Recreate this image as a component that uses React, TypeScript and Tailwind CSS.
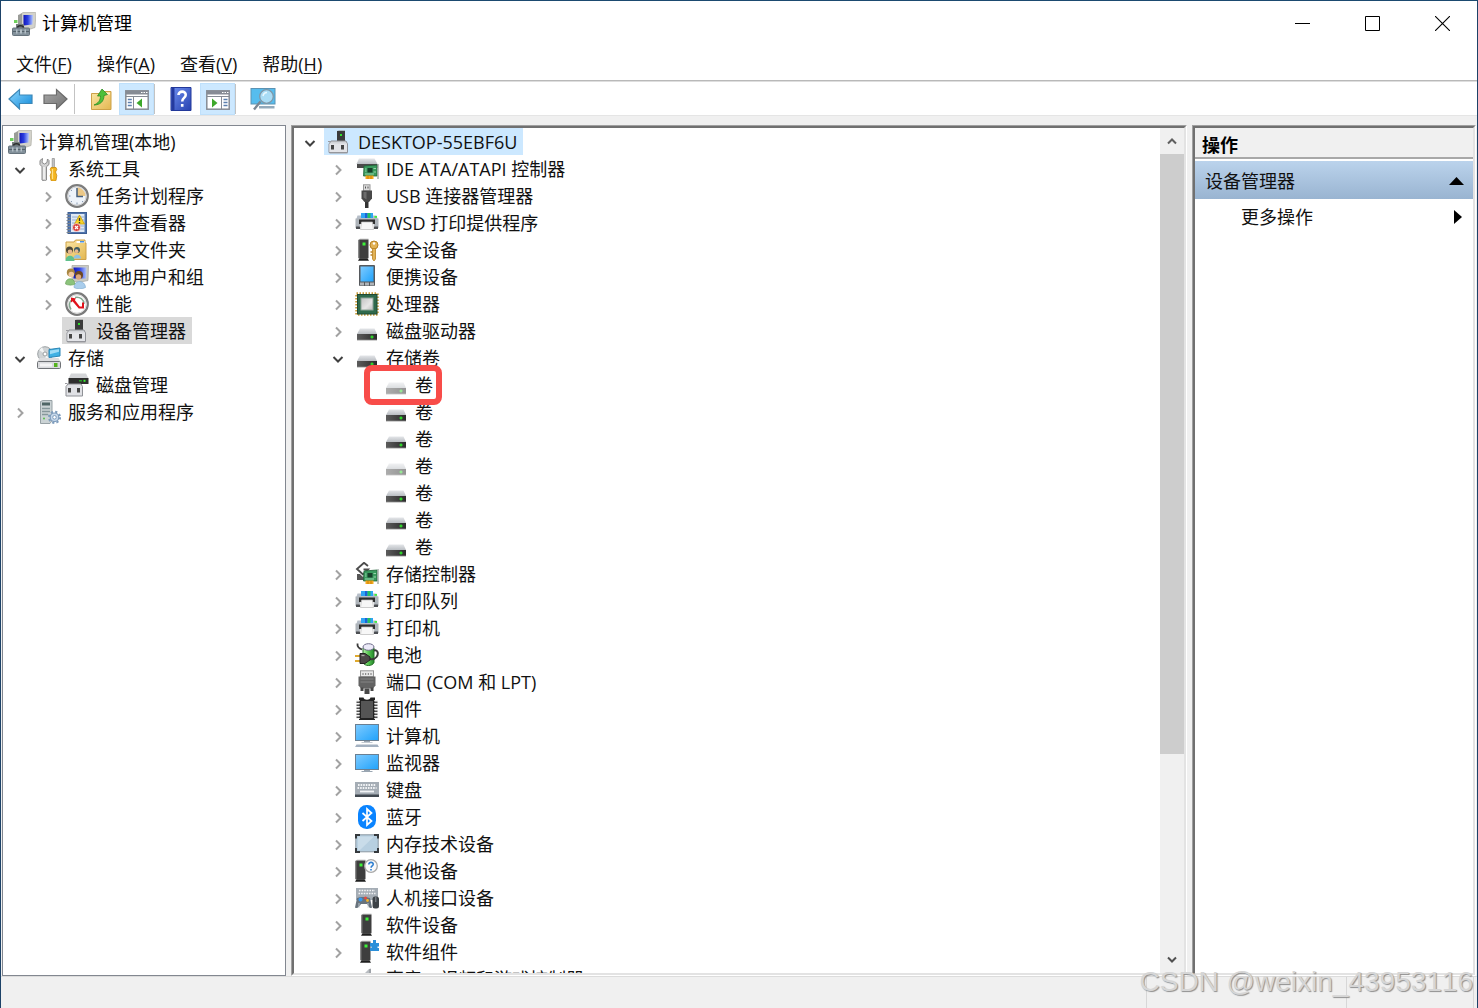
import type { ReactNode } from "react";

const FONT = "font-['Open_Sans','Noto_Sans_CJK_SC',sans-serif] [font-kerning:none]";

function Icon({ children, className = "" }: { children: ReactNode; className?: string }) {
  return (
    <svg viewBox="0 0 24 24" width="24" height="24" aria-hidden="true" className={`shrink-0 ${className}`}>
      {children}
    </svg>
  );
}

/* ---------- shared gradients ---------- */

function Gradients() {
  return (
    <svg width="0" height="0" aria-hidden="true" className="absolute">
      <defs>
        <linearGradient id="screen" x1="0" y1="0" x2="1" y2="1">
          <stop offset="0" stopColor="#7fcbff" />
          <stop offset="1" stopColor="#1fa2fb" />
        </linearGradient>
        <linearGradient id="crt" x1="0" y1="0" x2="1" y2="0">
          <stop offset="0" stopColor="#1217b8" />
          <stop offset="0.45" stopColor="#2b3fe0" />
          <stop offset="1" stopColor="#b4c8ff" />
        </linearGradient>
        <linearGradient id="slab" x1="0" y1="0" x2="0" y2="1">
          <stop offset="0" stopColor="#e4e6e9" />
          <stop offset="1" stopColor="#b9bdc2" />
        </linearGradient>
        <linearGradient id="dark" x1="0" y1="0" x2="1" y2="0">
          <stop offset="0" stopColor="#5c5c5c" />
          <stop offset="1" stopColor="#2b2b2b" />
        </linearGradient>
        <linearGradient id="folder" x1="0" y1="0" x2="1" y2="1">
          <stop offset="0" stopColor="#fbe7a6" />
          <stop offset="1" stopColor="#e3b750" />
        </linearGradient>
        <linearGradient id="back" x1="0" y1="0" x2="1" y2="1">
          <stop offset="0" stopColor="#8fd8ff" />
          <stop offset="1" stopColor="#1089d8" />
        </linearGradient>
        <linearGradient id="fwd" x1="0" y1="0" x2="1" y2="1">
          <stop offset="0" stopColor="#a9a9a9" />
          <stop offset="1" stopColor="#707070" />
        </linearGradient>
        <linearGradient id="help" x1="0" y1="0" x2="1" y2="1">
          <stop offset="0" stopColor="#6e8ff0" />
          <stop offset="1" stopColor="#2742b0" />
        </linearGradient>
        <linearGradient id="chip" x1="0" y1="0" x2="1" y2="1">
          <stop offset="0" stopColor="#c3c3c3" />
          <stop offset="0.6" stopColor="#e6e6e6" />
          <stop offset="1" stopColor="#bcbcbc" />
        </linearGradient>
        <linearGradient id="green" x1="0" y1="0" x2="1" y2="0">
          <stop offset="0" stopColor="#b9f0ad" />
          <stop offset="0.5" stopColor="#58c552" />
          <stop offset="1" stopColor="#23872a" />
        </linearGradient>
      </defs>
    </svg>
  );
}

/* ---------- console icons ---------- */

const ManagementIcon = () => (
  <Icon>
    <path d="M8 2.500L11 .5h12.500l.5 1-1 14-9 3-4-3z" fill="#d3d2ca" stroke="#a3a29b" strokeWidth=".6" />
    <path d="M6 3l4-1.500V17H6z" fill="#9a9c98" />
    <path d="M11.500 3H21l-.5 9.500-9 1z" fill="url(#crt)" />
    <path d="M2 8h3.500v3H2z" fill="#6fd05d" />
    <path d="M4 12h8v4H4z" fill="#77807f" />
    <path d="M5.500 16c0-3 6-3 6 0" fill="none" stroke="#2a2c2e" strokeWidth="1.600" />
    <rect x=".5" y="16" width="17" height="7.500" rx="1" fill="#83919b" stroke="#66737c" />
    <path d="M1 19.500h16" stroke="#55626b" strokeWidth="1" />
    <path d="M4 17.500h1.500v4H4zM8 17.500h2v4H8zM12.500 17.500H14v4h-1.500z" fill="#b4c0c7" />
  </Icon>
);

const ToolsIcon = () => (
  <Icon>
    <path d="M5.500 1.500L3 3.500v4l2 2.200v13.300c1 1 3.500 1 4.500 0V9.700L12 7.500v-4l-1.500-1.500-.5 3.500L7.500 7 5 5.500z" fill="#d2d2d2" stroke="#8a8a8a" />
    <path d="M7 10v12" stroke="#fff" strokeWidth="1.200" />
    <path d="M15.200 1.500h2.200v9h-2.200z" fill="#c6c6c6" stroke="#8b8b8b" strokeWidth=".7" />
    <path d="M14 10.500h5l.8 2-1.300 2.500 1.300 3.500-.8 5c-1.300.8-3.700.8-5 0l-.8-5L14.500 15l-1.300-2.500z" fill="#f4b51e" stroke="#c98a0c" strokeWidth=".8" />
    <path d="M15.500 12v10" stroke="#ffe28a" strokeWidth="1.200" />
  </Icon>
);

const ClockIcon = () => (
  <Icon>
    <circle cx="12" cy="12" r="10.800" fill="#eef3fa" stroke="#7d7d7d" strokeWidth="2.200" />
    <circle cx="12" cy="12" r="9.200" fill="none" stroke="#cdcdcd" strokeWidth="1" />
    <path d="M12 12V3.500A8.500 8.500 0 0 1 20.500 12z" fill="#ecc887" />
    <path d="M12 4v8.500h6" fill="none" stroke="#47607f" strokeWidth="1.500" />
    <path d="M12 18.500v2M4 12h1.500M6 6l1 1M6 18l1-1M18 18l-1-1" stroke="#8a9cb4" />
  </Icon>
);

const EventIcon = () => (
  <Icon>
    <rect x="3" y="1.500" width="18.500" height="21" fill="#4f74ad" stroke="#3d5f94" />
    <rect x="6" y="3" width="13.500" height="18" fill="#dfe9f5" />
    <path d="M7 6h12M7 9h12M7 12h12M7 15h12M7 18h12" stroke="#93aed2" />
    <path d="M1.500 3.500h4M1.500 6.500h4M1.500 9.500h4M1.500 12.500h4M1.500 15.500h4M1.500 18.500h4M1.500 21.500h4" stroke="#7e858e" strokeWidth="1.200" />
    <path d="M14.500 4l5 9h-10z" fill="#f7d426" stroke="#c69c10" strokeWidth=".8" />
    <path d="M14.500 7v3M14.500 11v1.200" stroke="#333" strokeWidth="1.300" />
    <circle cx="11.500" cy="16.500" r="4" fill="#d9423e" stroke="#fff" strokeWidth=".6" />
    <path d="M10 15l3 3M13 15l-3 3" stroke="#fff" strokeWidth="1.200" />
  </Icon>
);

const SharedIcon = () => (
  <Icon>
    <path d="M1 4h8l1.500-2H20v3h1v16.500H1z" fill="url(#folder)" stroke="#cda148" />
    <path d="M11.500 3h8v2h-8z" fill="#fff" />
    <path d="M15 3h4v1.500h-4z" fill="#4a90e0" />
    <path d="M8.500 20.500c0-5 7.500-5 7.500 0z" fill="#8fc1e3" />
    <circle cx="12" cy="12" r="3" fill="#3c5b62" />
    <circle cx="11.500" cy="13.200" r="1.900" fill="#e7b88e" />
    <path d="M.5 23c0-7 9-7 9 0z" fill="#5fc08b" />
    <circle cx="4.500" cy="12" r="3.500" fill="#4a4738" />
    <circle cx="5" cy="13.800" r="2.300" fill="#e7b88e" />
  </Icon>
);

const UsersIcon = () => (
  <Icon>
    <path d="M7 .5h16.500l-.5 15-10 2-6-2z" fill="#c9c9c2" stroke="#a5a59f" strokeWidth=".7" />
    <path d="M8.500 2.500H21.500l-.5 11H8.500z" fill="url(#crt)" />
    <path d="M9 22.500c0-8 11-8 11.500 0-3 1.800-9 1.800-11.500 0z" fill="#a9cdec" stroke="#7ba7cc" strokeWidth=".6" />
    <circle cx="14" cy="10" r="4" fill="#6d4722" />
    <circle cx="13.500" cy="12" r="2.700" fill="#dca87d" />
    <path d="M.5 19c0-7 9-7 9.500 0-2 1.500-7 1.500-9.500 0z" fill="#8cc37c" stroke="#669d58" strokeWidth=".6" />
    <circle cx="5.800" cy="7.500" r="4" fill="#a98742" />
    <circle cx="6.300" cy="9.500" r="2.800" fill="#f0c8a2" />
  </Icon>
);

const PerformanceIcon = () => (
  <Icon>
    <circle cx="12" cy="12" r="10.800" fill="#fff" stroke="#7b7b7b" strokeWidth="2.200" />
    <circle cx="12" cy="12" r="9.200" fill="none" stroke="#d3d3d3" />
    <path d="M6 17.500c-2.500-4-1.500-8 1.500-10.500M10 5.500c5-1 9 2 9 6.500" fill="none" stroke="#86a791" strokeWidth="1.500" />
    <path d="M6 5.500l5 1-1.200 1.500 5.700 7.500-1.500 1.300-6.500-7.500-1.500 1.200z" fill="#e0121b" />
    <path d="M14.500 15.500h3.500v-5" fill="none" stroke="#e0121b" strokeWidth="2" />
  </Icon>
);

const DeviceManagerIcon = () => (
  <Icon>
    <rect x="10" y="1" width="8" height="11" fill="#3b3b3b" />
    <path d="M10 1l2-.5h6V1z" fill="#8c8c8c" />
    <rect x="13" y="4" width="2" height="2" fill="#31e02c" />
    <path d="M4 11h15l1.500 3v8.500H2V14z" fill="#d3d5d9" stroke="#8f9196" />
    <rect x="2.500" y="13.500" width="17.500" height="8.500" fill="#e3e4e8" />
    <rect x="4" y="15" width="3" height="4.500" fill="#454545" />
    <rect x="14" y="15" width="3" height="4.500" fill="#454545" />
    <path d="M1 11.500h2.500M2.500 23h18" stroke="#9b9ba0" />
  </Icon>
);

const StorageIcon = () => (
  <Icon>
    <circle cx="8" cy="8" r="7.300" fill="#cfd3d5" stroke="#9ba0a2" />
    <path d="M8 8L2 4l3-3zM8 8l5 5-4 2z" fill="#f2f4f4" />
    <circle cx="8" cy="8" r="2" fill="#fff" stroke="#9ba0a2" />
    <path d="M12 3.500l11-1.500v8l-11 1.500z" fill="#3fb1e4" stroke="#2d86b5" />
    <path d="M13 4.500l9-1.300v2.500l-9 2.500z" fill="#9fdcf6" />
    <path d="M2.500 12h19l2 3.500h-23z" fill="#dcdddf" />
    <rect x=".5" y="15.500" width="23" height="7" rx="1" fill="#d9dadd" stroke="#6f7276" />
    <rect x="3" y="17.500" width="12" height="3" fill="#f4f4f5" />
    <rect x="17" y="17" width="3.500" height="4" fill="#55b31e" />
  </Icon>
);

const DiskManagementIcon = () => (
  <Icon>
    <path d="M6 .5h15l2.500 5h-20z" fill="#d4d5d8" />
    <rect x="3.500" y="5" width="20" height="6" fill="#2e2e2e" />
    <rect x="14" y="7" width="3" height="1.500" fill="#2a9b28" />
    <rect x="18.500" y="6.800" width="2" height="2" fill="#37ee31" />
    <path d="M3 11h13l1.500 2.500v9.500H1v-9.500z" fill="#e0e1e5" stroke="#8f9196" />
    <rect x="3" y="15" width="3" height="4.500" fill="#454545" />
    <rect x="12" y="15" width="3" height="4.500" fill="#454545" />
    <path d="M0 10.500h2.500" stroke="#9b9ba0" />
  </Icon>
);

const ServicesIcon = () => (
  <Icon>
    <path d="M3.500 1.500L6 .5h9v20l-2 3H3.500z" fill="#cbd3d5" stroke="#97a1a5" />
    <path d="M5 2.500h8v3H5z" fill="#4f6566" />
    <path d="M5 8.500h8M5 11.500h8M5 14.500h6" stroke="#86979b" strokeWidth="1.300" />
    <circle cx="7" cy="18.500" r="1" fill="#57bf4b" />
    <circle cx="17.500" cy="17.300" r="5.600" fill="none" stroke="#7f9dbd" strokeWidth="2" strokeDasharray="2.200 2.200" />
    <circle cx="17.500" cy="17.300" r="4.300" fill="#c7d8ea" stroke="#7f9dbd" strokeWidth="1.200" />
    <circle cx="17.500" cy="17.300" r="1.800" fill="#fff" stroke="#7f9dbd" />
  </Icon>
);

/* ---------- device icons ---------- */

const Board = ({ y = 0 }: { y?: number }) => (
  <g transform={`translate(0 ${y})`}>
    <path d="M9 9l13-1v11H8.500z" fill="#3a9a5e" stroke="#1f6437" strokeWidth=".8" />
    <path d="M12.500 11h5v4.500h-5z" fill="#17402a" />
    <path d="M10 12h1.500M10 14h1.500M18.500 11.500H21M18.500 15H21M10 17h9" stroke="#9fdcb2" strokeWidth=".9" />
    <path d="M10.500 18.500h8v3.500h-8z" fill="#f5a81c" />
    <path d="M13 19v3M16 19v3" stroke="#b8730a" strokeWidth=".7" />
    <path d="M23 7v15" stroke="#8f9a94" strokeWidth="1.200" />
  </g>
);

const IdeIcon = () => (
  <Icon>
    <path d="M4 1.500h15.500l3 5.500h-21z" fill="url(#slab)" />
    <path d="M2 7h20.500v4H2z" fill="#4a4a4a" />
    <Board />
  </Icon>
);

const UsbIcon = () => (
  <Icon>
    <rect x="8.500" y=".8" width="6.500" height="6" fill="#dcdcdc" stroke="#979797" />
    <path d="M10.500 2.500v2M13 2.500v2" stroke="#555" />
    <path d="M6.500 6.500h10.500v8l-3 3.500h-4.500l-3-3.500z" fill="#484848" />
    <path d="M8.500 8h3v7.500L8.500 13.500z" fill="#6c6c6c" />
    <path d="M10 18h3.500v6H10z" fill="#333" />
  </Icon>
);

const PrinterIcon = () => (
  <Icon>
    <path d="M2.500 4.500L1 9h22l-1.500-4.500z" fill="#b6bec8" />
    <path d="M6 2h12v5H6z" fill="#2fa4f4" />
    <path d="M10 2h2.500v5H10z" fill="#1c62d8" />
    <path d="M12.500 2h3v5h-3z" fill="#25bf62" />
    <path d="M.5 7.500h5l1 1h11l1-1h5v9.500h-3.500l-2-6H6l-2 6H.5z" fill="#aeb4ba" />
    <path d="M4 8.500h16v4.500H4z" fill="#2d2d2d" />
    <path d="M1 15.500h4V18H1zM19 15.500h4V18h-4z" fill="#4c4f53" />
    <path d="M6.500 11h11l1 7.500h-13z" fill="#f7f7f7" stroke="#b9b9b9" strokeWidth=".7" />
    <rect x="19.500" y="5" width="2.500" height="1.800" fill="#3cf03c" />
  </Icon>
);

const Tower = ({ x = 0 }: { x?: number }) => (
  <g transform={`translate(${x} 0)`}>
    <path d="M1.500 2L3 .8h8.500V2z" fill="#a7a7a7" />
    <rect x="1.500" y="1.800" width="10" height="18.500" fill="#3e3e3e" />
    <path d="M1.500 2h1v18h-1z" fill="#747474" />
    <rect x="5.500" y="4.500" width="3" height="3" fill="#3cf138" />
    <path d="M2.500 20.300h8l1.500 2.500H1z" fill="#1f1f1f" />
  </g>
);

const SecurityIcon = () => (
  <Icon>
    <Tower x={2} />
    <circle cx="19" cy="7" r="4" fill="#e2b255" stroke="#b98325" />
    <circle cx="19" cy="5.500" r="1.200" fill="#fff" />
    <path d="M17.500 10.500h3V21l-1.500 2-1.500-2z" fill="#e2b255" stroke="#b98325" strokeWidth=".8" />
    <path d="M17.500 14h-2M17.500 17h-2" stroke="#b98325" strokeWidth="1.300" />
  </Icon>
);

const PortableIcon = () => (
  <Icon>
    <rect x="4" y="0" width="16" height="21" rx="1" fill="#56595d" />
    <rect x="5.500" y="1.500" width="13" height="15" fill="url(#screen)" />
    <path d="M5 17.500h4v3H5zM10 17.500h4v3h-4zM15 17.500h4v3h-4z" fill="#aeb3b8" />
  </Icon>
);

const CpuIcon = () => (
  <Icon>
    <rect x="1.500" y="1.500" width="21" height="21" fill="none" stroke="#c79b3a" strokeWidth="2.500" strokeDasharray="1.500 1.500" />
    <rect x="2.500" y="2.500" width="19.500" height="19.500" fill="#2f6a4c" stroke="#1f4a34" />
    <rect x="6" y="6" width="12" height="12" fill="url(#chip)" stroke="#8da497" />
  </Icon>
);

const DriveIcon = ({ faded = false }: { faded?: boolean }) => (
  <Icon className={faded ? "opacity-50" : ""}>
    <path d="M5 9.500h14.500l2.500 5.500H2z" fill="url(#slab)" />
    <rect x="2" y="15" width="20" height="6" fill="url(#dark)" />
    <path d="M2 21h20" stroke="#8a8a8a" strokeWidth=".8" />
    <path d="M15.500 18h3M17 16.500v3" stroke="#2fe02b" strokeWidth="1.400" />
  </Icon>
);

const StorageControllerIcon = () => (
  <Icon>
    <path d="M2 12h16v6H2z" fill="#555" />
    <path d="M13 8h6l3 2.500h-9z" fill="#cfcfcf" />
    <path d="M13 4L9 .8 2 7l6 5.500 5-5H8.500" fill="none" stroke="#fff" strokeWidth="3.500" />
    <path d="M13 4L9 .8 2 7l6 5.500 5-5H8.500" fill="none" stroke="#4c4c4c" strokeWidth="1.900" />
    <Board y={0} />
  </Icon>
);

const BatteryIcon = () => (
  <Icon>
    <path d="M8 5v14.500c1.500 4 9.500 4 11 0V5z" fill="url(#green)" stroke="#256f27" />
    <ellipse cx="13.500" cy="4" rx="5.500" ry="3.300" fill="#eceaf8" stroke="#6c6a88" />
    <path d="M2.500 .5c-.5 4 2 5 4.500 6" fill="none" stroke="#3b3b3b" strokeWidth="1.800" />
    <path d="M19 7.500c4.500-1 4.500 4 2.500 6.500S16 16.500 14 16" fill="none" stroke="#3b3b3b" strokeWidth="2" />
    <path d="M0 13h5M0 18h5" stroke="#dfa92e" strokeWidth="2" />
    <path d="M5 10.500h5l5 3.500v3l-5 3.500H5z" fill="#4c4848" stroke="#252323" />
    <path d="M6.500 12.500h3" stroke="#a9a4a4" strokeWidth="1.300" />
  </Icon>
);

const PortIcon = () => (
  <Icon>
    <rect x="5.500" y=".8" width="13" height="6" fill="#e9e9e9" stroke="#969696" />
    <path d="M8 3v2M10.700 3v2M13.300 3v2M16 3v2" stroke="#777" />
    <path d="M3.500 6.500h17v9l-2.500 3H6l-2.500-3z" fill="#636363" />
    <path d="M5.500 9h13M5.500 12h13" stroke="#858585" />
    <path d="M5.500 17.500h3V21h-3zM15.500 17.500h3V21h-3zM9.500 18.500h5V24h-5z" fill="#484848" />
  </Icon>
);

const FirmwareIcon = () => (
  <Icon>
    <path d="M4 .5h4.500c.5 3 6.500 3 7 0H20v22.500H4z" fill="#222" />
    <path d="M6 4h12v17H6z" fill="#555" />
    <path d="M3 3v19M21 3v19" stroke="#f2f2f2" strokeWidth="3.500" strokeDasharray="1.500 1.500" />
    <path d="M3 4.500v18M21 4.500v18" stroke="#4f4f4f" strokeWidth="3" strokeDasharray="1.500 1.500" />
  </Icon>
);

const ComputerIcon = () => (
  <Icon>
    <rect x=".5" y=".5" width="23" height="16" fill="url(#screen)" stroke="#6a7f92" />
    <path d="M9 17h6v1.500H9z" fill="#9aa6b2" />
    <path d="M6.500 18.500h11" stroke="#c3cad2" />
    <path d="M1.500 20.500h21l1.500 2.500H0z" fill="#a3b1c1" />
  </Icon>
);

const MonitorIcon = () => (
  <Icon>
    <rect x=".5" y="3.500" width="23" height="15" fill="url(#screen)" stroke="#6a7f92" />
    <path d="M9 19h6v1.500H9z" fill="#9aa6b2" />
    <path d="M6.500 20.500h11" stroke="#9aa6b2" />
  </Icon>
);

const KeyboardIcon = () => (
  <Icon>
    <rect x="0" y="4" width="24" height="13" fill="#a5adb5" />
    <path d="M0 16.500h24V19H0z" fill="#404850" />
    <path d="M3 7h18M2.500 10h19" stroke="#f2f4f6" strokeWidth="1.800" strokeDasharray="1.600 1" />
    <path d="M5 13.500h14" stroke="#f2f4f6" strokeWidth="1.800" />
  </Icon>
);

const BluetoothIcon = () => (
  <Icon>
    <rect x="3" y="0" width="18" height="24" rx="8.500" fill="#0a84ff" />
    <path d="M7.500 8l9 8-4.500 4V4l4.500 4-9 8" fill="none" stroke="#fff" strokeWidth="1.700" />
  </Icon>
);

const MemoryIcon = () => (
  <Icon>
    <rect x=".8" y="2.800" width="22.400" height="17" rx="1.500" fill="#b7cfe0" stroke="#8a97a1" />
    <path d="M1 6.500V3h4M19 3h4v3.500M23 16v4h-4M5 20H1v-4" fill="none" stroke="#35393d" strokeWidth="2" />
    <path d="M3 4.500h16L5 18H3z" fill="#d5e4ef" opacity=".6" />
  </Icon>
);

const OtherIcon = () => (
  <Icon>
    <Tower x={-1} />
    <circle cx="16" cy="7" r="6.300" fill="#fafafa" stroke="#a9a9a9" strokeWidth="1.300" />
    <path d="M13.800 5.500c0-3 4.700-2.700 4.400 0-.2 1.500-2 1.500-2.100 3.200M16 10v1.500" fill="none" stroke="#2f7fd0" strokeWidth="1.600" />
  </Icon>
);

const HidIcon = () => (
  <Icon>
    <rect x="1" y="2" width="22" height="12" fill="#a5adb5" />
    <path d="M4 4.500h16M3.500 7.500h17" stroke="#f2f4f6" strokeWidth="1.600" strokeDasharray="1.600 1" />
    <path d="M2 12c2-1.500 10-1.500 13 0l2 9.500c-2 1.500-3 0-5-3.500H6c-2 3.500-4 5-6 3.500z" fill="#68737d" />
    <circle cx="5.500" cy="13.500" r="2" fill="#3897ee" />
    <circle cx="10.500" cy="12" r="1.500" fill="#e8483c" />
    <circle cx="12.500" cy="14.500" r="1.400" fill="#f1b52b" />
    <rect x="17.500" y="10.500" width="6.500" height="12" rx="2.500" fill="#3d4247" />
    <path d="M20.800 11v5" stroke="#8a9299" />
    <path d="M4 17v5M13 17v5" stroke="#cfd5da" strokeWidth=".8" />
  </Icon>
);

const SoftwareDeviceIcon = () => (
  <Icon>
    <Tower x={5} />
  </Icon>
);

const SoftwareComponentIcon = () => (
  <Icon>
    <Tower x={4} />
    <path d="M15 3h3V0h3v3h3v3.500h-1.500V8H24v3h-9V8h1.500V6.500H15z" fill="#2b8fd9" />
  </Icon>
);

const SoundIcon = () => (
  <Icon>
    <path d="M7 9l7-7 2-.5V23l-2-1-7-6z" fill="#b9bdc2" />
    <path d="M15 2v20" stroke="#84888d" />
  </Icon>
);

/* ---------- tree ---------- */

function Chevron({ open }: { open: boolean }) {
  return open ? (
    <svg viewBox="0 0 12 12" width="12" height="12" aria-hidden="true">
      <path d="M1.500 4L6 8.500 10.500 4" fill="none" stroke="#404040" strokeWidth="2" />
    </svg>
  ) : (
    <svg viewBox="0 0 12 12" width="12" height="12" aria-hidden="true">
      <path d="M4 1.500L8.500 6 4 10.500" fill="none" stroke="#a2a2a2" strokeWidth="2" />
    </svg>
  );
}

type Node = {
  label: string;
  icon: ReactNode;
  level: 0 | 1 | 2;
  state?: "open" | "closed";
  tone?: string;
  marked?: boolean;
};

const consoleIndent = ["pl-[2px]", "pl-[3px]", "pl-[31px]"];
const deviceIndent = ["pl-[2px]", "pl-[30px]", "pl-[59px]"];

function Tree({ nodes, indent, label }: { nodes: Node[]; indent: string[]; label: string }) {
  return (
    <ul role="tree" aria-label={label} className="min-w-0 flex-1 overflow-hidden">
      {nodes.map((n, i) => {
        const rootWithoutToggle = n.level === 0 && !n.state;
        return (
          <li
            key={i}
            role="treeitem"
            aria-level={n.level + 1}
            aria-expanded={n.state ? n.state === "open" : undefined}
            className={`relative flex h-[27px] ${indent[n.level]}`}
          >
            {!rootWithoutToggle && (
              <div className="flex w-7 shrink-0 items-center justify-center pt-0.5">
                {n.state && (
                  <button type="button" aria-label={`${n.label} ${n.state === "open" ? "折叠" : "展开"}`}>
                    <Chevron open={n.state === "open"} />
                  </button>
                )}
              </div>
            )}
            <button
              type="button"
              className={`flex h-[27px] items-start gap-[7px] pt-0.5 pr-[6px] pl-[3px] leading-[25px] whitespace-nowrap ${n.tone ?? ""}`}
            >
              {n.icon}
              <span>{n.label}</span>
            </button>
            {n.marked && (
              <span className="pointer-events-none absolute -top-1.5 left-[70px] z-10 h-10 w-[78px] rounded-lg border-6 border-[#f84c49]" />
            )}
          </li>
        );
      })}
    </ul>
  );
}

const consoleNodes: Node[] = [
  { label: "计算机管理(本地)", icon: <ManagementIcon />, level: 0 },
  { label: "系统工具", icon: <ToolsIcon />, level: 1, state: "open" },
  { label: "任务计划程序", icon: <ClockIcon />, level: 2, state: "closed" },
  { label: "事件查看器", icon: <EventIcon />, level: 2, state: "closed" },
  { label: "共享文件夹", icon: <SharedIcon />, level: 2, state: "closed" },
  { label: "本地用户和组", icon: <UsersIcon />, level: 2, state: "closed" },
  { label: "性能", icon: <PerformanceIcon />, level: 2, state: "closed" },
  { label: "设备管理器", icon: <DeviceManagerIcon />, level: 2, tone: "bg-[#d9d9d9]" },
  { label: "存储", icon: <StorageIcon />, level: 1, state: "open" },
  { label: "磁盘管理", icon: <DiskManagementIcon />, level: 2 },
  { label: "服务和应用程序", icon: <ServicesIcon />, level: 1, state: "closed" },
];

const volume = (faded = false, marked = false): Node => ({
  label: "卷",
  icon: <DriveIcon faded={faded} />,
  level: 2,
  marked,
});

const category = (label: string, icon: ReactNode, state: "open" | "closed" = "closed"): Node => ({
  label,
  icon,
  level: 1,
  state,
});

const deviceNodes: Node[] = [
  { label: "DESKTOP-55EBF6U", icon: <DeviceManagerIcon />, level: 0, state: "open", tone: "bg-[#cce8ff]" },
  category("IDE ATA/ATAPI 控制器", <IdeIcon />),
  category("USB 连接器管理器", <UsbIcon />),
  category("WSD 打印提供程序", <PrinterIcon />),
  category("安全设备", <SecurityIcon />),
  category("便携设备", <PortableIcon />),
  category("处理器", <CpuIcon />),
  category("磁盘驱动器", <DriveIcon />),
  category("存储卷", <DriveIcon />, "open"),
  volume(true, true),
  volume(),
  volume(),
  volume(true),
  volume(),
  volume(),
  volume(),
  category("存储控制器", <StorageControllerIcon />),
  category("打印队列", <PrinterIcon />),
  category("打印机", <PrinterIcon />),
  category("电池", <BatteryIcon />),
  category("端口 (COM 和 LPT)", <PortIcon />),
  category("固件", <FirmwareIcon />),
  category("计算机", <ComputerIcon />),
  category("监视器", <MonitorIcon />),
  category("键盘", <KeyboardIcon />),
  category("蓝牙", <BluetoothIcon />),
  category("内存技术设备", <MemoryIcon />),
  category("其他设备", <OtherIcon />),
  category("人机接口设备", <HidIcon />),
  category("软件设备", <SoftwareDeviceIcon />),
  category("软件组件", <SoftwareComponentIcon />),
  category("声音、视频和游戏控制器", <SoundIcon />),
];

/* ---------- window chrome ---------- */

function TitleBar() {
  const button = "flex h-full w-[70px] items-center justify-center";
  return (
    <header className="flex h-[45px] shrink-0 items-center pl-[11px]">
      <ManagementIcon />
      <h1 className="flex-1 pl-[6px] text-black">计算机管理</h1>
      <button type="button" aria-label="最小化" className={button}>
        <svg width="15" height="15" aria-hidden="true">
          <path d="M0 7.500h15" stroke="#000" />
        </svg>
      </button>
      <button type="button" aria-label="最大化" className={button}>
        <svg width="15" height="15" aria-hidden="true">
          <path d="M.5.5h14v14H.5z" fill="none" stroke="#000" />
        </svg>
      </button>
      <button type="button" aria-label="关闭" className={button}>
        <svg width="15" height="15" aria-hidden="true">
          <path d="M0 0l15 15M15 0L0 15" stroke="#000" strokeWidth="1.100" />
        </svg>
      </button>
    </header>
  );
}

const menus = [
  ["文件", "F"],
  ["操作", "A"],
  ["查看", "V"],
  ["帮助", "H"],
];

function MenuBar() {
  return (
    <nav className="flex h-[34px] shrink-0 items-center gap-[25px] pt-0.5 pl-[15px]">
      {menus.map(([name, key]) => (
        <button type="button" key={key} className="leading-[27px]">
          {name}(<span className="underline decoration-1 underline-offset-2">{key}</span>)
        </button>
      ))}
    </nav>
  );
}

const Separator = () => <span className="h-[30px] w-px bg-[#c3c3c3]" />;

function PaneIcon({ flip }: { flip: boolean }) {
  return (
    <svg viewBox="0 0 24 20" width="24" height="20" aria-hidden="true">
      <rect x=".8" y=".8" width="22.400" height="18.400" fill="#fff" stroke="#868b94" strokeWidth="1.500" />
      <path d="M1 1h22v3.500H1z" fill="#868b94" />
      <path d="M16 2.500h1.500M18.500 2.500H20M21 2.500h1.500" stroke="#fff" />
      <path d="M1 6.500h22" stroke="#868b94" />
      {flip ? (
        <>
          <path d="M15.500 7v12" stroke="#868b94" />
          <path d="M17.500 9.500h4M17.500 12.500h4M17.500 15.500h4" stroke="#5b7fae" strokeWidth="1.300" />
          <path d="M6 8.500l5.500 4.500L6 17.500z" fill="#3da82b" />
        </>
      ) : (
        <>
          <path d="M8.500 7v12" stroke="#868b94" />
          <path d="M2.800 9.500h4M2.800 12.500h4M2.800 15.500h4" stroke="#5b7fae" strokeWidth="1.300" />
          <path d="M17 8.500L11.500 13l5.500 4.500z" fill="#3da82b" />
        </>
      )}
    </svg>
  );
}

function ToolBar() {
  const toggled = "flex h-8 w-[35px] items-center justify-center border border-[#bfe0fb] bg-[#cce8ff] pt-0.5";
  return (
    <div role="toolbar" aria-label="工具栏" className="flex h-[34px] shrink-0 items-center border-b border-[#e5e5e5] pt-px pl-[7px]">
      <button type="button" aria-label="后退" className="mr-[10px]">
        <svg viewBox="0 0 25 22" width="25" height="22" aria-hidden="true">
          <path d="M1 11L11.500 1.500V7H24v8.500H11.500V21z" fill="url(#back)" stroke="#3d88b8" strokeWidth="1.200" />
        </svg>
      </button>
      <button type="button" aria-label="前进">
        <svg viewBox="0 0 25 22" width="25" height="22" aria-hidden="true">
          <path d="M24 11L13.500 1.500V7H1v8.500h12.500V21z" fill="url(#fwd)" stroke="#6a6a6a" strokeWidth="1.200" />
        </svg>
      </button>
      <span className="mr-[15px] ml-[6px] flex">
        <Separator />
      </span>
      <button type="button" aria-label="上一级" className="mr-[5px]">
        <Icon>
          <path d="M1.500 6.500h8l2-2H21v18H1.500z" fill="url(#folder)" stroke="#cda148" />
          <path d="M13 5.500h7v2h-7z" fill="#fff3c9" />
          <path d="M4 18c4-1.500 6.500-4.500 6.500-9H7.500L12 2l5.500 5.500-3.500 1c0 6-4 9.500-10 9.500z" fill="#4cc03a" stroke="#2e8d22" strokeWidth=".8" />
        </Icon>
      </button>
      <button type="button" aria-label="显示/隐藏控制台树" aria-pressed="true" className={toggled}>
        <PaneIcon flip={false} />
      </button>
      <span className="mr-[15px] flex">
        <Separator />
      </span>
      <button type="button" aria-label="帮助" className="mr-2">
        <svg viewBox="0 0 22 24" width="22" height="24" aria-hidden="true">
          <path d="M1 .5h20v23H1z" fill="url(#help)" stroke="#22389a" />
          <path d="M1.500 1h3v22h-3z" fill="#243a9e" />
          <path d="M8.500 8c0-4.500 7.500-4.500 7.200 0-.2 3-3.500 3-3.500 6.500M12.200 17v2.800" fill="none" stroke="#fff" strokeWidth="2.600" />
        </svg>
      </button>
      <button type="button" aria-label="显示/隐藏操作窗格" aria-pressed="true" className={toggled}>
        <PaneIcon flip />
      </button>
      <span className="mr-[14px] flex">
        <Separator />
      </span>
      <button type="button" aria-label="扫描检测硬件改动">
        <svg viewBox="0 0 26 24" width="26" height="24" aria-hidden="true">
          <rect x="1" y="1.500" width="24" height="15.500" fill="#56bdee" stroke="#5b93b4" />
          <path d="M9 19h15.500v2.500H9z" fill="#93aabb" />
          <path d="M10.500 14.500L4 22.500" stroke="#7a8793" strokeWidth="2.400" />
          <circle cx="16.500" cy="9.500" r="6.800" fill="#a9dcf5" stroke="#8098a8" strokeWidth="1.300" />
          <path d="M13 9c.5-2.500 2-3.500 4-3.500" fill="none" stroke="#e9f8ff" strokeWidth="1.500" />
        </svg>
      </button>
    </div>
  );
}

function ScrollBar() {
  return (
    <div className="flex w-6 shrink-0 flex-col bg-[#f0f0f0]">
      <button type="button" aria-label="向上滚动" className="flex h-[26px] items-center justify-center">
        <svg width="10" height="8" aria-hidden="true">
          <path d="M1 6.500L5 2.500l4 4" fill="none" stroke="#606060" strokeWidth="2" />
        </svg>
      </button>
      <div className="grow-[757] bg-[#cdcdcd]" />
      <div className="grow-[243]" />
      <button type="button" aria-label="向下滚动" className="flex h-[26px] items-center justify-center">
        <svg width="10" height="8" aria-hidden="true">
          <path d="M1 1.500l4 4 4-4" fill="none" stroke="#505050" strokeWidth="2" />
        </svg>
      </button>
    </div>
  );
}

function SunkenPanel({ className, children }: { className: string; children: ReactNode }) {
  return (
    <div className={`flex min-h-0 border border-t-[#a0a0a0] border-r-white border-b-white border-l-[#a0a0a0] ${className}`}>
      <div className="flex min-w-0 flex-1 overflow-hidden border-2 border-t-[#707070] border-r-[#e3e3e3] border-b-[#e3e3e3] border-l-[#707070] bg-white">
        {children}
      </div>
    </div>
  );
}

function ActionsPane() {
  return (
    <aside className="min-w-0 flex-1">
      <h2 className="h-[31px] border-b-2 border-[#a8a8a8] bg-[#f0f0f0] pt-px pl-[7px] leading-[32px] font-bold text-black">操作</h2>
      <button
        type="button"
        className="mt-0.5 flex h-[38px] w-full items-center justify-between bg-linear-to-b from-[#bbd3ec] to-[#99b4d1] pt-0.5 pr-[9px] pl-[10px]"
      >
        <span>设备管理器</span>
        <svg width="15" height="8" aria-hidden="true">
          <path d="M7.500 0L15 8H0z" fill="#000" />
        </svg>
      </button>
      <button type="button" className="flex h-[34px] w-full items-center justify-between pt-0.5 pr-[11px] pl-[46px]">
        <span>更多操作</span>
        <svg width="8" height="14" aria-hidden="true">
          <path d="M0 0l8 7-8 7z" fill="#000" />
        </svg>
      </button>
    </aside>
  );
}

export default function App() {
  return (
    <div
      className={`relative flex h-screen flex-col overflow-hidden border-x border-t border-x-[#1d4268] border-t-[#1b4a70] bg-white text-[18px] text-[#111] ${FONT}`}
    >
      <Gradients />
      <TitleBar />
      <MenuBar />
      <div className="h-0.5 shrink-0 border-t border-[#b9b9b9] bg-[#dedede]" />
      <ToolBar />
      <main className="flex min-h-0 flex-1 gap-[5px] bg-[#f0f0f0] pt-[9px] pr-px pl-px">
        <div className="flex w-[284px] shrink-0 border border-[#828790] bg-white pt-0.5">
          <Tree nodes={consoleNodes} indent={consoleIndent} label="控制台树" />
        </div>
        <SunkenPanel className="min-w-0 flex-1">
          <Tree nodes={deviceNodes} indent={deviceIndent} label="设备" />
          <ScrollBar />
        </SunkenPanel>
        <SunkenPanel className="w-[284px] shrink-0">
          <ActionsPane />
        </SunkenPanel>
      </main>
      <footer className="flex h-8 shrink-0 border-t border-[#dcdcdc] bg-[#f0f0f0] pr-[3px]">
        <span className="flex-1 border-r border-[#d7d7d7]" />
        <span className="w-[200px] border-r border-[#d7d7d7]" />
        <span className="w-[127px] border-r border-[#d7d7d7]" />
      </footer>
      <p className="pointer-events-none absolute right-1 bottom-2 font-['Liberation_Sans',Arial,sans-serif] text-[28px] leading-9 text-[#d6d6d6] [text-shadow:1px_1px_1px_#8f8f8f]">
        CSDN @weixin_43953116
      </p>
    </div>
  );
}
